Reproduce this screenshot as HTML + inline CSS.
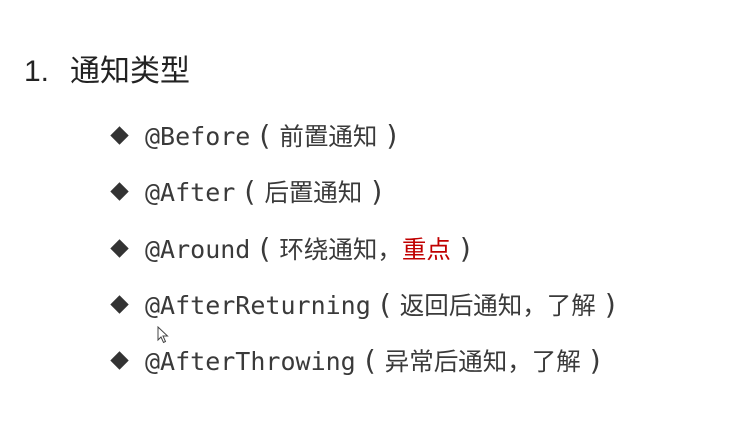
<!DOCTYPE html>
<html><head><meta charset="utf-8"><style>
body{margin:0;width:743px;height:430px;background:#fff;overflow:hidden;position:relative;font-family:"DejaVu Sans Mono","Noto Sans CJK JP",monospace;color:#3a3a3a}
.t{position:absolute;left:24px;top:52px;font-family:"Liberation Sans","Noto Sans CJK SC",sans-serif;font-size:30px;color:#222;line-height:40px}
.t b{font-weight:normal;margin-left:21px}
.r{position:absolute;left:108px;font-size:25px;line-height:34px;white-space:nowrap}
.d{display:inline-block;width:13px;height:13px;background:#333;transform:rotate(45deg);margin:0 19px 0 5px;vertical-align:3px}
.c{font-family:"Noto Sans CJK JP",sans-serif;font-size:24.5px}
.p{display:inline-block;width:29px;text-align:center;font-family:"DejaVu Sans",sans-serif;font-size:28px;line-height:30px;vertical-align:top;margin-top:2px}
.red{color:#c00000}
</style></head><body>
<div class="t">1.<b>通知类型</b></div>
<div class="r" style="top:119px"><span class="d"></span>@Before<span class="c"><span class="p">(</span>前置通知<span class="p">)</span></span></div>
<div class="r" style="top:175px"><span class="d"></span>@After<span class="c"><span class="p">(</span>后置通知<span class="p">)</span></span></div>
<div class="r" style="top:232px"><span class="d"></span>@Around<span class="c"><span class="p">(</span>环绕通知，<span class="red">重点</span><span class="p">)</span></span></div>
<div class="r" style="top:288px"><span class="d"></span>@AfterReturning<span class="c"><span class="p">(</span>返回后通知，了解<span class="p">)</span></span></div>
<div class="r" style="top:344px"><span class="d"></span>@AfterThrowing<span class="c"><span class="p">(</span>异常后通知，了解<span class="p">)</span></span></div>
<svg style="position:absolute;left:157px;top:326px" width="12" height="18" viewBox="0 0 12 18"><path d="M1 1 L1 14 L4 11 L6.5 16.5 L8.5 15.5 L6 10 L10.5 10 Z" fill="#fff" stroke="#444" stroke-width="1"/></svg>
</body></html>
